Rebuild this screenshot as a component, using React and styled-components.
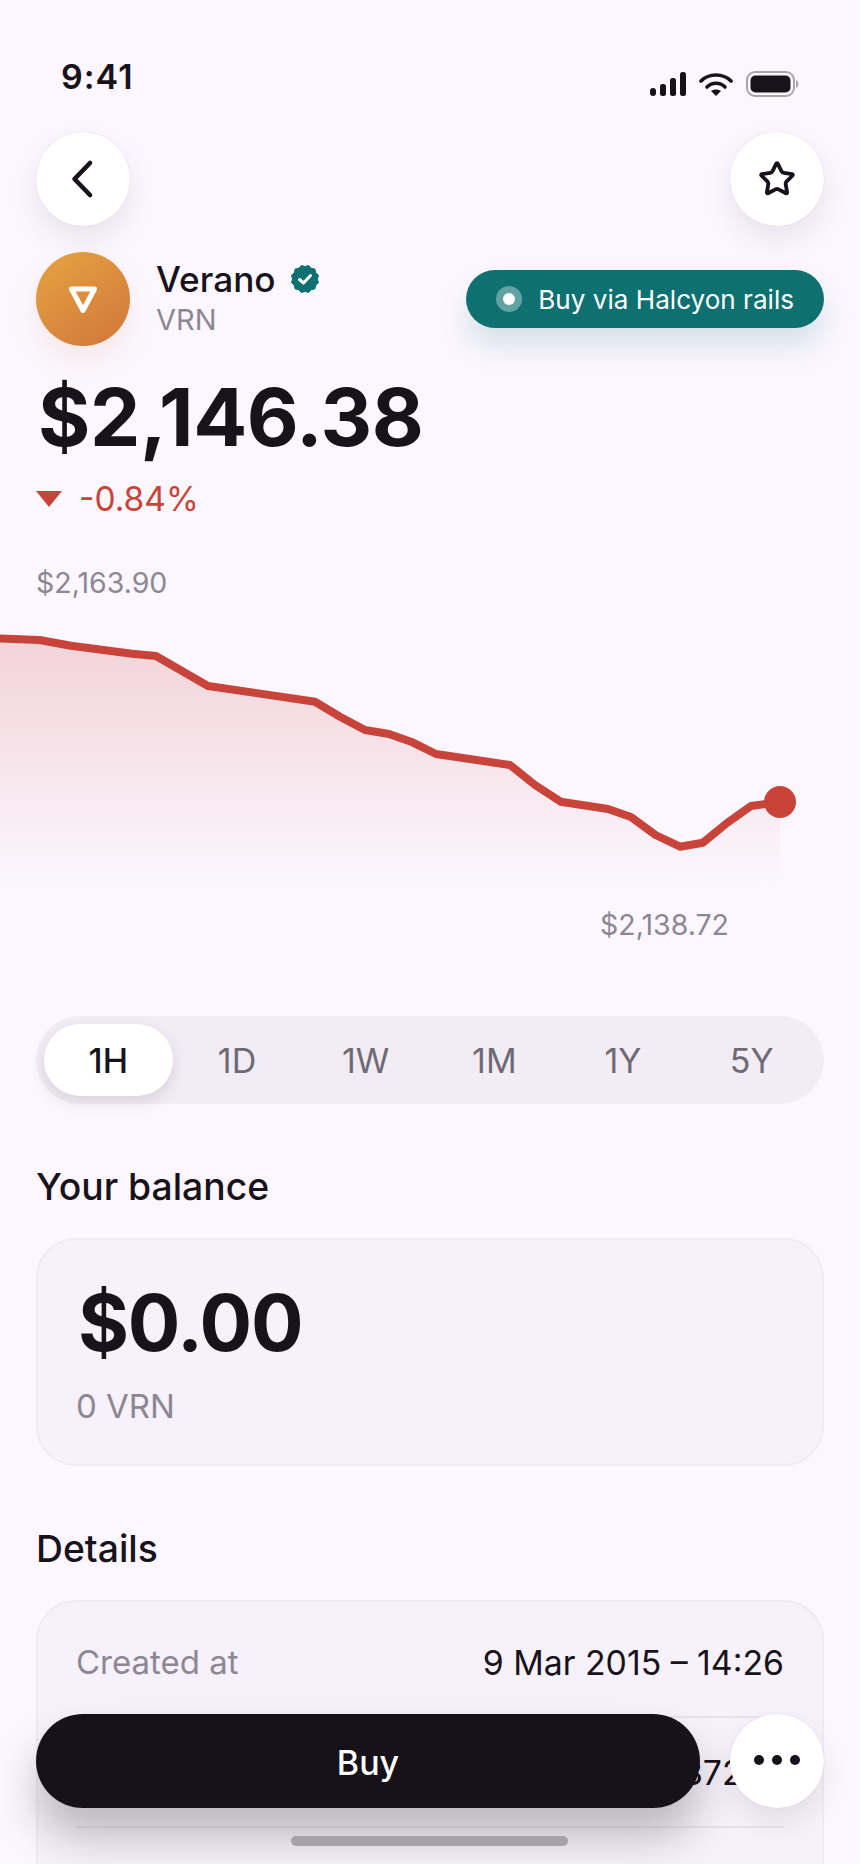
import React from 'react'
import styled, { createGlobalStyle } from 'styled-components'
import { Star } from 'lucide-react'

const GlobalStyle = createGlobalStyle`
  html, body {
    margin: 0;
    padding: 0;
    background: #fcf7ff;
  }
`

const Screen = styled.div`
  position: relative;
  width: 860px;
  height: 1864px;
  overflow: hidden;
  background: #fcf7ff;
  color: #18131b;
  font-family: Inter, "Liberation Sans", sans-serif;
`
const StatusBar = styled.div`
  display: flex;
  justify-content: space-between;
  height: 132px;
  padding: 57px 61px 0 61px;
  box-sizing: border-box;
`
const Time = styled.div`
  font-size: 34px;
  line-height: 40px;
  font-weight: 600;
  letter-spacing: 1px;
`
const StatusIcons = styled.div`
  display: flex;
  align-items: center;
  gap: 13px;
  height: 24px;
  margin-top: 15px;
`
const TopBar = styled.div`
  display: flex;
  justify-content: space-between;
  padding: 0 36px;
`
const RoundButton = styled.button`
  display: flex;
  align-items: center;
  justify-content: center;
  width: 94px;
  height: 94px;
  padding: 0;
  border: 0;
  border-radius: 50%;
  background: #fff;
  color: #18131b;
  box-shadow: 0 0 1px rgba(40, 20, 50, 0.2), 0 14px 30px rgba(40, 20, 50, 0.09);
`
const AssetRow = styled.div`
  display: flex;
  align-items: center;
  padding: 0 36px;
  margin-top: 26px;
`
const CoinIcon = styled.div`
  display: flex;
  align-items: center;
  justify-content: center;
  width: 94px;
  height: 94px;
  border-radius: 50%;
  background: linear-gradient(145deg, #e6a442, #d0763a);
  box-shadow: 0 14px 30px rgba(200, 120, 60, 0.12);
`
const AssetText = styled.div`
  margin-left: 26px;
  margin-top: -4px;
`
const AssetName = styled.div`
  display: flex;
  align-items: center;
  gap: 15px;
  font-size: 35.2px;
  line-height: 44px;
  font-weight: 500;
`
const AssetSymbol = styled.div`
  margin-top: 1px;
  font-size: 29px;
  line-height: 36px;
  color: #8d8794;
`
const RailsPill = styled.div`
  display: flex;
  align-items: center;
  gap: 16px;
  height: 58px;
  margin-left: auto;
  padding: 0 30px 0 30px;
  border-radius: 29px;
  background: #0e7070;
  color: #fff;
  font-size: 26.1px;
  font-weight: 400;
  box-shadow: 0 18px 30px rgba(14, 112, 112, 0.16);
`
const RailsDot = styled.span`
  display: flex;
  align-items: center;
  justify-content: center;
  width: 26px;
  height: 26px;
  border-radius: 50%;
  background: rgba(255, 255, 255, 0.35);
  &::after {
    content: '';
    width: 12px;
    height: 12px;
    border-radius: 50%;
    background: #fff;
  }
`
const Price = styled.div`
  margin-top: 31px;
  padding-left: 38px;
  font-size: 80px;
  line-height: 80px;
  font-weight: 700;
  letter-spacing: -0.4px;
`
const Change = styled.div`
  display: flex;
  align-items: center;
  gap: 17px;
  height: 40px;
  margin-top: 22px;
  padding-left: 36px;
  font-size: 33.5px;
  color: #c8443b;
`
const DownArrow = styled.span`
  width: 0;
  height: 0;
  border-left: 13px solid transparent;
  border-right: 13px solid transparent;
  border-top: 16px solid #c8443b;
`
const ChartLabel = styled.div`
  height: 36px;
  font-size: 28.5px;
  line-height: 36px;
  color: #8d8794;
  text-align: ${(p) => (p.$low ? 'right' : 'left')};
  margin-top: ${(p) => (p.$low ? '7px' : '46px')};
  padding: ${(p) => (p.$low ? '0 131px 0 0' : '0 0 0 36px')};
`
const ChartSvg = styled.svg`
  display: block;
  margin-top: 19px;
`
const Tabs = styled.div`
  display: grid;
  grid-template-columns: repeat(6, 1fr);
  height: 88px;
  margin: 73px 36px 0;
  padding: 8px;
  box-sizing: border-box;
  border-radius: 44px;
  background: #f2edf4;
`
const Tab = styled.div`
  display: flex;
  align-items: center;
  justify-content: center;
  border-radius: 36px;
  font-size: 34px;
  font-weight: ${(p) => (p.$active ? 500 : 400)};
  color: ${(p) => (p.$active ? '#18131b' : '#6f6a75')};
  background: ${(p) => (p.$active ? '#fff' : 'transparent')};
  box-shadow: ${(p) => (p.$active ? '0 6px 16px rgba(40, 20, 50, 0.12)' : 'none')};
`
const SectionTitle = styled.h2`
  margin: 61px 36px 0;
  font-size: 37.3px;
  line-height: 44px;
  font-weight: 500;
`
const Card = styled.div`
  margin: 29px 36px 0;
  border: 2px solid #f0ebf3;
  border-radius: 40px;
  background: #f6f1fa;
`
const BalanceCard = styled(Card)`
  height: 228px;
  padding: 43px 38px 0;
  box-sizing: border-box;
`
const BalanceValue = styled.div`
  padding-left: 2px;
  font-size: 78px;
  line-height: 80px;
  font-weight: 700;
  letter-spacing: -1.2px;
`
const BalanceUnits = styled.div`
  margin-top: 23px;
  font-size: 33px;
  line-height: 40px;
  color: #8d8794;
`
const DetailsCard = styled(Card)`
  padding: 6px 38px 200px;
`
const DetailRow = styled.div`
  display: flex;
  align-items: center;
  justify-content: space-between;
  height: 108px;
  border-bottom: 2px solid #e8e3eb;
`
const DetailLabel = styled.span`
  font-size: 33px;
  color: #8d8794;
`
const DetailValue = styled.span`
  font-size: 33.8px;
  font-weight: 400;
`
const BottomActions = styled.div`
  position: absolute;
  left: 36px;
  right: 36px;
  top: 1714px;
  display: flex;
  gap: 30px;
`
const BuyButton = styled.button`
  flex: 1;
  height: 94px;
  padding: 3px 0 0;
  border: 0;
  border-radius: 47px;
  background: #17121a;
  color: #fff;
  font-family: inherit;
  font-size: 34px;
  font-weight: 500;
  box-shadow: 0 28px 44px rgba(23, 18, 26, 0.26);
`
const MoreDots = styled.span`
  display: flex;
  gap: 8px;
  margin-top: -2px;
  i {
    width: 10px;
    height: 10px;
    border-radius: 50%;
    background: #18131b;
  }
`
const HomeIndicator = styled.div`
  position: absolute;
  left: 291px;
  top: 1836px;
  width: 277px;
  height: 10px;
  border-radius: 5px;
  background: #a7a2a9;
`

const pts = [
  [-10, 638], [39.5, 640], [71, 645.7], [132, 653.7], [156, 656], [208, 686], [315, 701.7],
  [340, 716.7], [365, 730], [389, 734], [411, 741.7], [436, 754], [510, 765], [535, 785],
  [560.6, 801.7], [608, 809], [631, 817], [655.5, 835], [680, 846.7], [703, 842.7], [727, 823],
  [751, 806], [780, 802],
].map(([x, y]) => [x, y - 620])
const linePath = pts.map(([x, y], i) => `${i ? 'L' : 'M'}${x} ${y}`).join(' ')

const SignalIcon = () => (
  <svg width="36" height="24" viewBox="0 0 36 24">
    <g fill="#18131b">
      <rect x="0" y="16" width="6" height="8" rx="3" />
      <rect x="10" y="12" width="6" height="12" rx="2.5" />
      <rect x="20" y="6" width="6" height="18" rx="2.5" />
      <rect x="30" y="0" width="6" height="24" rx="2.5" />
    </g>
  </svg>
)

const WifiIcon = () => (
  <svg width="34" height="24" viewBox="0 0 34 24">
    <path d="M2 9 C10 1 24 1 32 9" fill="none" stroke="#18131b" strokeWidth="3.6" strokeLinecap="round" />
    <path d="M8 15 C13 10 21 10 26 15" fill="none" stroke="#18131b" strokeWidth="3.6" strokeLinecap="round" />
    <path d="M12 19 C15 17 19 17 22 19 L17 24 Z" fill="#18131b" />
  </svg>
)

const BatteryIcon = () => (
  <svg width="53" height="26" viewBox="0 0 53 26">
    <rect x="1" y="1" width="47" height="24" rx="8" fill="none" stroke="#a9a4ae" strokeWidth="2" />
    <rect x="4.5" y="4.5" width="40" height="17" rx="5" fill="#18131b" />
    <path d="M50 9 C52 10 52.5 11.5 52.5 13 C52.5 14.5 52 16 50 17 Z" fill="#a9a4ae" />
  </svg>
)

const BackIcon = () => (
  <svg width="40" height="44" viewBox="0 0 40 44">
    <path d="M27 6 L11.5 22 L27 38" fill="none" stroke="#18131b" strokeWidth="4.6" strokeLinecap="round" strokeLinejoin="round" />
  </svg>
)

const CoinLogo = () => (
  <svg width="30" height="30" viewBox="0 0 30 30">
    <path d="M3.5 5 H26.5 L15 26.5 Z" fill="none" stroke="#fff" strokeWidth="5" strokeLinejoin="round" />
  </svg>
)

const scallopPoints = Array.from({ length: 24 }, (_, i) => {
  const a = (i * Math.PI) / 12
  const r = i % 2 ? 14 : 12.4
  return `${14 + r * Math.cos(a)},${14 + r * Math.sin(a)}`
}).join(' ')

const VerifiedBadge = () => (
  <svg width="28" height="28" viewBox="0 0 28 28">
    <polygon points={scallopPoints} fill="#0e7070" stroke="#0e7070" strokeWidth="1" strokeLinejoin="round" />
    <path d="M8.5 14.5 L12.5 18 L19.5 10.5" fill="none" stroke="#fff" strokeWidth="3" strokeLinecap="round" strokeLinejoin="round" />
  </svg>
)

const ranges = ['1H', '1D', '1W', '1M', '1Y', '5Y']

export default function App() {
  return (
    <Screen>
      <GlobalStyle />
      <StatusBar>
        <Time>9:41</Time>
        <StatusIcons>
          <SignalIcon />
          <WifiIcon />
          <BatteryIcon />
        </StatusIcons>
      </StatusBar>
      <TopBar>
        <RoundButton aria-label="Back"><BackIcon /></RoundButton>
        <RoundButton aria-label="Favourite"><Star size={38} strokeWidth={2.4} /></RoundButton>
      </TopBar>
      <AssetRow>
        <CoinIcon><CoinLogo /></CoinIcon>
        <AssetText>
          <AssetName>Verano <VerifiedBadge /></AssetName>
          <AssetSymbol>VRN</AssetSymbol>
        </AssetText>
        <RailsPill><RailsDot />Buy via Halcyon rails</RailsPill>
      </AssetRow>
      <Price>$2,146.38</Price>
      <Change><DownArrow />-0.84%</Change>
      <ChartLabel>$2,163.90</ChartLabel>
      <ChartSvg width="860" height="280" viewBox="0 0 860 280">
        <defs>
          <linearGradient id="chartFill" x1="0" y1="0" x2="0" y2="1">
            <stop offset="0" stopColor="#c8443b" stopOpacity="0.2" />
            <stop offset="1" stopColor="#c8443b" stopOpacity="0" />
          </linearGradient>
        </defs>
        <path d={`${linePath} L780 268 L-10 268 Z`} fill="url(#chartFill)" />
        <path d={linePath} fill="none" stroke="#c8443b" strokeWidth="8" strokeLinejoin="round" />
        <circle cx="780" cy="182" r="16" fill="#c8443b" />
      </ChartSvg>
      <ChartLabel $low>$2,138.72</ChartLabel>
      <Tabs>
        {ranges.map((r, i) => (
          <Tab key={r} $active={i === 0}>{r}</Tab>
        ))}
      </Tabs>
      <SectionTitle>Your balance</SectionTitle>
      <BalanceCard>
        <BalanceValue>$0.00</BalanceValue>
        <BalanceUnits>0 VRN</BalanceUnits>
      </BalanceCard>
      <SectionTitle>Details</SectionTitle>
      <DetailsCard>
        <DetailRow>
          <DetailLabel>Created at</DetailLabel>
          <DetailValue>9 Mar 2015 – 14:26</DetailValue>
        </DetailRow>
        <DetailRow>
          <DetailLabel>Market cap</DetailLabel>
          <DetailValue>$16,372.18</DetailValue>
        </DetailRow>
      </DetailsCard>
      <BottomActions>
        <BuyButton>Buy</BuyButton>
        <RoundButton aria-label="More">
          <MoreDots><i /><i /><i /></MoreDots>
        </RoundButton>
      </BottomActions>
      <HomeIndicator />
    </Screen>
  )
}
